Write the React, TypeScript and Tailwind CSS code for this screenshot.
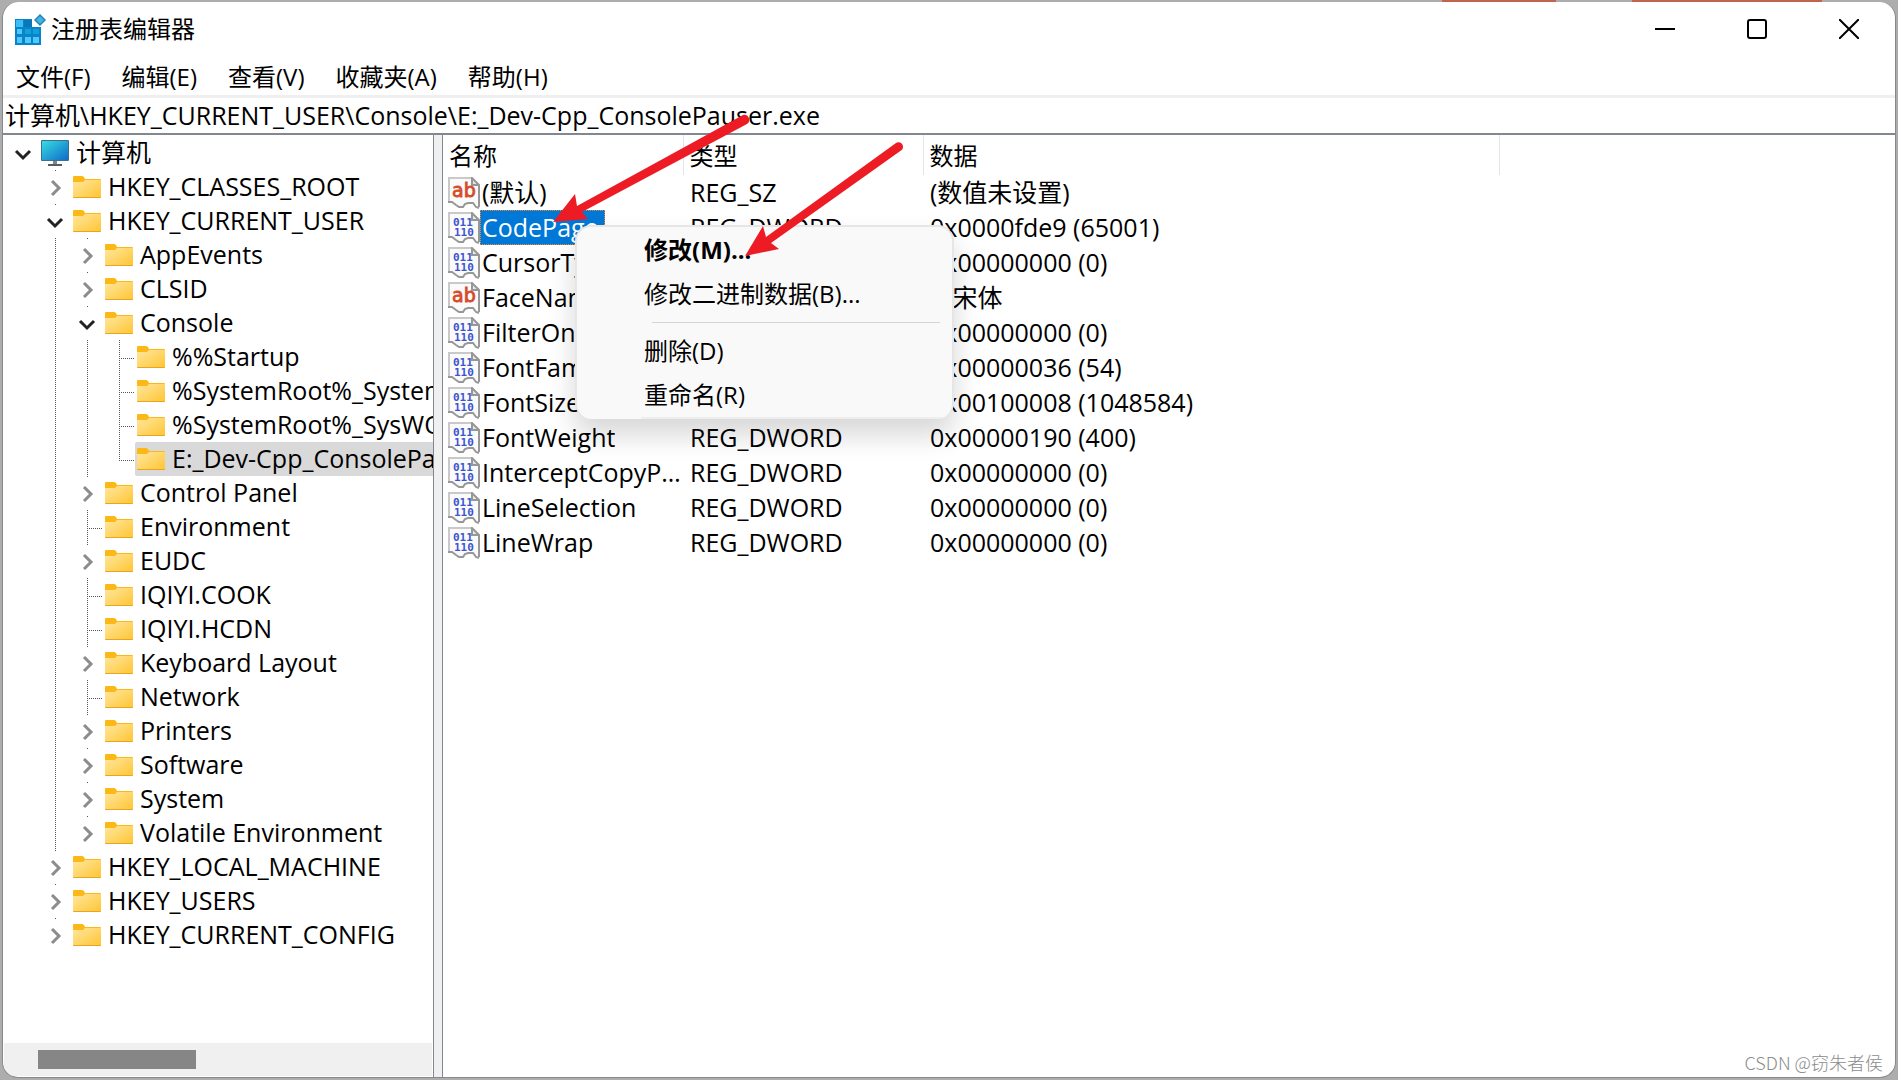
import { useState } from 'react';

type Key = { name: string; level: number; open?: boolean; leaf?: boolean; last?: boolean; guides?: number[] };
type Value = { name: string; type: string; data: string };

const keys: Key[] = [
  { name: '计算机', level: 0, open: true },
  { name: 'HKEY_CLASSES_ROOT', level: 1 },
  { name: 'HKEY_CURRENT_USER', level: 1, open: true },
  { name: 'AppEvents', level: 2, guides: [1] },
  { name: 'CLSID', level: 2, guides: [1] },
  { name: 'Console', level: 2, open: true, guides: [1] },
  { name: '%%Startup', level: 3, leaf: true, guides: [1, 2] },
  { name: '%SystemRoot%_System32_WindowsPowerShell', level: 3, leaf: true, guides: [1, 2] },
  { name: '%SystemRoot%_SysWOW64_WindowsPowerShell', level: 3, leaf: true, guides: [1, 2] },
  { name: 'E:_Dev-Cpp_ConsolePauser.exe', level: 3, leaf: true, last: true, guides: [1, 2] },
  { name: 'Control Panel', level: 2, guides: [1] },
  { name: 'Environment', level: 2, leaf: true, guides: [1] },
  { name: 'EUDC', level: 2, guides: [1] },
  { name: 'IQIYI.COOK', level: 2, leaf: true, guides: [1] },
  { name: 'IQIYI.HCDN', level: 2, leaf: true, guides: [1] },
  { name: 'Keyboard Layout', level: 2, guides: [1] },
  { name: 'Network', level: 2, leaf: true, guides: [1] },
  { name: 'Printers', level: 2, guides: [1] },
  { name: 'Software', level: 2, guides: [1] },
  { name: 'System', level: 2, guides: [1] },
  { name: 'Volatile Environment', level: 2, guides: [1] },
  { name: 'HKEY_LOCAL_MACHINE', level: 1 },
  { name: 'HKEY_USERS', level: 1 },
  { name: 'HKEY_CURRENT_CONFIG', level: 1 },
];

const values: Value[] = [
  { name: '(默认)', type: 'REG_SZ', data: '(数值未设置)' },
  { name: 'CodePage', type: 'REG_DWORD', data: '0x0000fde9 (65001)' },
  { name: 'CursorType', type: 'REG_DWORD', data: '0x00000000 (0)' },
  { name: 'FaceName', type: 'REG_SZ', data: '@宋体' },
  { name: 'FilterOnPaste', type: 'REG_DWORD', data: '0x00000000 (0)' },
  { name: 'FontFamily', type: 'REG_DWORD', data: '0x00000036 (54)' },
  { name: 'FontSize', type: 'REG_DWORD', data: '0x00100008 (1048584)' },
  { name: 'FontWeight', type: 'REG_DWORD', data: '0x00000190 (400)' },
  { name: 'InterceptCopyPaste', type: 'REG_DWORD', data: '0x00000000 (0)' },
  { name: 'LineSelection', type: 'REG_DWORD', data: '0x00000000 (0)' },
  { name: 'LineWrap', type: 'REG_DWORD', data: '0x00000000 (0)' },
];

const menus = ['文件(F)', '编辑(E)', '查看(V)', '收藏夹(A)', '帮助(H)'];

const RegeditIcon = () => (
  <svg width="32" height="32" viewBox="0 0 32 32" aria-hidden="true">
    <path d="M0 6h17v8h9v18H0z" fill="#0a84c8" />
    <path d="M1 7h7v7H1z" fill="#3bbdf5" />
    <path d="M9 7h8v7H9z" fill="#0a78b8" />
    <path d="M2 16h5v5H2z" fill="#4fc9fb" />
    <path d="M10 16h6v5h-6zM18 16h6v5h-6z" fill="#10a0dc" />
    <path d="M2 24h5v6H2zM10 24h6v6h-6zM18 24h6v6h-6z" fill="#4fc9fb" />
    <path d="M25 1l6 6-6 6-6-6z" fill="#1f83b8" />
    <path d="M25 3l4 4-4 4-4-4z" fill="#45b2e2" />
  </svg>
);

const ComputerIcon = () => (
  <svg className="shrink-0" width="28" height="26" viewBox="0 0 28 26" aria-hidden="true">
    <defs>
      <linearGradient id="screen" x1="0" y1="0" x2="1" y2="1">
        <stop offset="0" stopColor="#37dbe3" />
        <stop offset="1" stopColor="#0f6cc6" />
      </linearGradient>
    </defs>
    <rect width="28" height="21" rx="1" fill="#3b6f8c" />
    <rect x="1" y="1" width="26" height="19" fill="url(#screen)" />
    <path d="M12 21h4v3h-4z" fill="#7d868c" />
    <path d="M7 24h14v2H7z" fill="#555d63" />
  </svg>
);

const FolderIcon = () => (
  <svg className="shrink-0" width="28" height="22" viewBox="0 0 28 22" aria-hidden="true">
    <defs>
      <linearGradient id="folder" x1="0" y1="0" x2="1" y2="1">
        <stop offset="0" stopColor="#ffe79f" />
        <stop offset="1" stopColor="#ffc533" />
      </linearGradient>
    </defs>
    <path d="M0 1q0-1 1-1h8q1 0 2 1l1 2h15q1 0 1 1v5H0z" fill="#fbb816" />
    <path d="M0 6h10l2-2h16v17q0 1-1 1H1q-1 0-1-1z" fill="url(#folder)" />
    <path d="M0 21h28q0 1-1 1H1q-1 0-1-1z" fill="#e9a520" />
  </svg>
);

const ValueIcon = ({ text }: { text: boolean }) => (
  <svg className="shrink-0" width="32" height="32" viewBox="0 0 32 32" aria-hidden="true">
    <path d="M1 1h23l7 7v22l-5-2-3-3-4 1-3 4-5 1-5-4-5-2z" fill="#fafafa" />
    <path d="M1 25V1h23" fill="none" stroke="#c9c9c9" strokeWidth="2" />
    <path d="M24 1v7h7z" fill="#e8e8e8" stroke="#979797" strokeWidth="2" />
    <path d="M31 8v22M0 25h4l4 3 3 2h4l2-3 3-1h5l3 4 3 1" fill="none" stroke="#979797" strokeWidth="2" />
    {text ? (
      <text x="4" y="20" fontSize="19" fontFamily="'DejaVu Sans', sans-serif" fill="#d64a29" stroke="#d64a29" strokeWidth=".8">ab</text>
    ) : (
      <g fontSize="11" fontWeight="bold" fontFamily="'DejaVu Sans Mono', monospace" fill="#3a55d0">
        <text x="5" y="14">011</text>
        <text x="6" y="24">110</text>
      </g>
    )}
  </svg>
);

// one 32px wide indent cell of the dotted tree lines
const Guide = ({ kind }: { kind: 'line' | 'tee' | 'elbow' }) => (
  <svg className="shrink-0" width="32" height="34" stroke="#555" strokeDasharray="1 1" aria-hidden="true">
    <path d={kind === 'elbow' ? 'M16.5 0v19' : 'M16.5 0v34'} />
    {kind !== 'line' && <path d="M16 18.5h15" />}
  </svg>
);

const Toggle = ({ item }: { item: Key }) => (
  <button type="button" aria-label={(item.open ? '折叠 ' : '展开 ') + item.name} className="shrink-0">
    <svg width="32" height="34" fill="none" strokeWidth="3" aria-hidden="true">
      {item.level > 0 && <path d="M16 .5h1" stroke="#555" strokeWidth="1" />}
      {item.open ? (
        <path d="M9 15l7 7 7-7" stroke="#222" />
      ) : (
        <path d="M13 11l7 7-7 7" stroke="#8c8c8c" />
      )}
    </svg>
  </button>
);

const TreeRow = ({ item, selected, onSelect }: { item: Key; selected: boolean; onSelect: () => void }) => (
  <li className="flex h-[34px] items-center">
    {Array.from({ length: item.level }, (_, i) =>
      item.guides?.includes(i) ? <Guide key={i} kind="line" /> : <span key={i} className="w-8 shrink-0" />
    )}
    {item.leaf ? <Guide kind={item.last ? 'elbow' : 'tee'} /> : <Toggle item={item} />}
    <button
      type="button"
      onClick={onSelect}
      className={
        'flex h-full items-center gap-[7px] whitespace-nowrap pl-[2px] ' +
        (selected ? 'grow rounded-l-xs bg-[#d9d9d9]' : '')
      }
    >
      {item.level === 0 ? <ComputerIcon /> : <FolderIcon />}
      <span className="pb-[2px]">{item.name}</span>
    </button>
  </li>
);

const TitleBar = () => (
  <header className="flex h-14 shrink-0 items-start justify-between">
    <div className="flex h-[54px] items-center gap-1 pl-3">
      <RegeditIcon />
      <h1>注册表编辑器</h1>
    </div>
    <div className="flex">
      <button type="button" aria-label="最小化" className="flex h-[54px] w-[92px] items-center justify-center">
        <svg width="20" height="20"><path d="M0 10h20" stroke="#000" strokeWidth="2" /></svg>
      </button>
      <button type="button" aria-label="最大化" className="flex h-[54px] w-[92px] items-center justify-center">
        <svg width="20" height="20"><rect x="1" y="1" width="18" height="18" rx="2" fill="none" stroke="#000" strokeWidth="2" /></svg>
      </button>
      <button type="button" aria-label="关闭" className="flex h-[54px] w-[92px] items-center justify-center">
        <svg width="20" height="20"><path d="M0 0l20 20M20 0L0 20" stroke="#000" strokeWidth="2" /></svg>
      </button>
    </div>
  </header>
);

const ContextMenu = () => (
  <div role="menu" className="absolute left-[575px] top-[225px] w-[379px] overflow-hidden rounded-2xl border-2 border-b-0 border-[#e6e6e6] bg-[#f9f9f9] pt-px shadow-[0_16px_28px_rgba(0,0,0,0.16)]">
    <button type="button" role="menuitem" className="block h-11 w-full pl-[67px] text-left font-bold">修改(M)...</button>
    <button type="button" role="menuitem" className="block h-11 w-full pl-[67px] text-left">修改二进制数据(B)...</button>
    <hr className="my-[6px] ml-[75px] mr-3 border-[#d4d4d4]" />
    <button type="button" role="menuitem" className="block h-11 w-full pl-[67px] text-left">删除(D)</button>
    <button type="button" role="menuitem" className="block h-11 w-full pl-[67px] text-left">重命名(R)</button>
    <div className="ml-16 h-[2px] bg-[#eeeeee]" />
  </div>
);

const Arrows = () => (
  <svg className="pointer-events-none absolute left-0 top-0" width="920" height="270" fill="#ed1c24" aria-hidden="true">
    <path d="M553 222l22-28 2 12 166-91a5 5 0 0 1 4 9L582 212l6 7z" />
    <path d="M745 256l18-30 3 11 130-94a4.5 4.5 0 0 1 5 7.5L771 243l8 6z" />
  </svg>
);

const App = () => {
  const [selectedKey, setSelectedKey] = useState('E:_Dev-Cpp_ConsolePauser.exe');
  const [selectedValue, setSelectedValue] = useState('CodePage');

  return (
    <div className="relative flex h-screen flex-col bg-[#adadad] bg-[linear-gradient(90deg,transparent_76%,#bf6450_76%,#bf6450_82%,transparent_82%,transparent_86%,#bf6450_86%,#bf6450_96%,transparent_96%)] bg-[length:100%_2px] bg-no-repeat px-[2px] pb-[2px] pt-[2px] font-['Open_Sans','Noto_Sans_CJK_SC',sans-serif] text-[24px] leading-8 text-black">
      <div className="flex min-h-0 grow flex-col overflow-hidden rounded-2xl border-x border-b border-[#85888e] bg-white">
        <TitleBar />
        <nav className="flex h-[37px] shrink-0 items-center gap-[5px]">
          {menus.map((m) => (
            <button key={m} type="button" className="px-[13px]">{m}</button>
          ))}
        </nav>
        <input
          aria-label="地址"
          className="h-[38px] shrink-0 border-t-3 border-[#efefef] px-[2px] pb-1 text-[25px] outline-none"
          defaultValue="计算机\HKEY_CURRENT_USER\Console\E:_Dev-Cpp_ConsolePauser.exe"
        />
        <div className="flex min-h-0 grow border-t-2 border-[#828790]">
          <aside className="flex w-[431px] shrink-0 flex-col border-r border-[#828790]">
            <ul className="min-h-0 grow overflow-hidden pl-1 pr-px pt-px text-[25px]">
              {keys.map((k) => (
                <TreeRow key={k.name} item={k} selected={k.name === selectedKey} onSelect={() => setSelectedKey(k.name)} />
              ))}
            </ul>
            <div className="mx-px mb-px h-[33px] shrink-0 bg-[#f0f0f0] py-[7px] pl-[34px]">
              <div className="h-[19px] w-[158px] bg-[#868686]" />
            </div>
          </aside>
          <div className="w-2 shrink-0 bg-[#f0f0f0]" />
          <main className="min-w-0 grow border-l border-[#828790]">
            <table className="table-fixed border-collapse text-left">
              <thead>
                <tr className="h-10">
                  <th className="w-60 border-r border-[#e5e5e5] p-0 pl-[6px] pt-[2px] font-normal">名称</th>
                  <th className="w-60 border-r border-[#e5e5e5] p-0 pl-[6px] pt-[2px] font-normal">类型</th>
                  <th className="w-[576px] border-r border-[#e5e5e5] p-0 pl-[6px] pt-[2px] font-normal">数据</th>
                </tr>
              </thead>
              <tbody className="text-[25px]">
                {values.map((v) => (
                  <tr key={v.name} className="h-[35px]" onClick={() => setSelectedValue(v.name)}>
                    <td className="p-0 pl-[5px]">
                      <div className="flex h-[35px] w-[235px] items-center">
                        <ValueIcon text={v.type === 'REG_SZ'} />
                        <span
                          className={
                            'h-[35px] truncate pl-[2px] leading-[35px] ' +
                            (v.name === selectedValue ? 'bg-[#0078d7] pr-[6px] text-white outline outline-dotted -outline-offset-1 outline-[#ff8728]' : '')
                          }
                        >
                          {v.name}
                        </span>
                      </div>
                    </td>
                    <td className="p-0 pb-[2px] pl-[7px]">{v.type}</td>
                    <td className="p-0 pb-[2px] pl-[7px]">{v.data}</td>
                  </tr>
                ))}
              </tbody>
            </table>
          </main>
        </div>
      </div>
      <ContextMenu />
      <Arrows />
      <p className="absolute bottom-1 right-[15px] font-['Noto_Sans_CJK_SC',sans-serif] text-[18px] font-light leading-7 text-[#8c8c8c]">CSDN @窃朱者侯</p>
    </div>
  );
};

export default App;
